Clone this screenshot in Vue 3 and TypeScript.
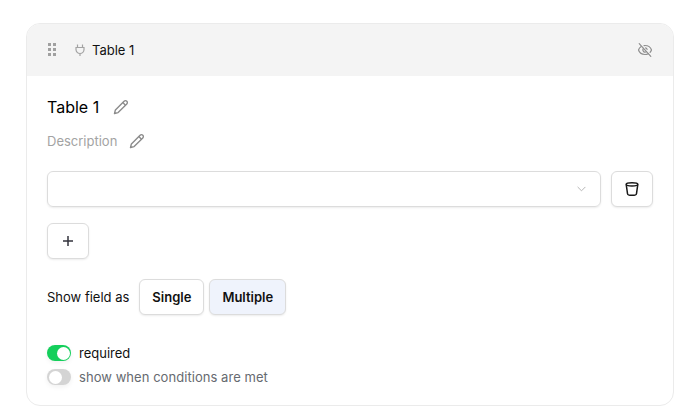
<template>
  <div class="page">
    <section class="card">
      <header class="card-head">
        <div class="head-left">
          <span class="grip"><i v-for="n in 6" :key="n"></i></span>
          <svg class="plug" viewBox="0 0 12 12" width="12" height="12" fill="none" stroke="#a3a3a3" stroke-width="1.200">
            <path d="M3.500 .5v3M8.500 .5v3M2 3.500h8v2a4 4 0 0 1-8 0zM6 9.500V12" />
          </svg>
          <span class="head-title">Table 1</span>
        </div>
        <svg class="eye" viewBox="0 0 16 16" width="16" height="16" fill="none" stroke="#8f8f8f" stroke-width="1.200" stroke-linecap="round">
          <path d="M2.200 1.600l11.600 12.800" />
          <path d="M4.200 4.600C2.800 5.500 1.900 6.800 1.500 8c.9 2.700 3.500 4.500 6.500 4.500 1.200 0 2.300-.3 3.300-.8M7 3.600c.3 0 .7-.1 1-.1 3 0 5.600 1.800 6.500 4.500-.3.900-.8 1.700-1.400 2.400" />
          <path d="M6.400 6.500a2.200 2.200 0 0 0 3.100 3.100M8.600 5.900a2.200 2.200 0 0 1 1.500 1.500" />
        </svg>
      </header>

      <div class="card-body">
        <div class="title-row">
          <span class="title">Table 1</span>
          <svg class="pencil" viewBox="0 0 16 16" width="16" height="16" fill="none" stroke="#8c8c8c" stroke-width="1.400" stroke-linejoin="round">
            <path d="M1.500 14.500l.9-3.600 8.700-8.700a1.900 1.900 0 0 1 2.700 2.700l-8.700 8.700z" />
            <path d="M9.800 3.500l2.700 2.700" />
          </svg>
        </div>
        <div class="desc-row">
          <span class="desc">Description</span>
          <svg class="pencil" viewBox="0 0 16 16" width="16" height="16" fill="none" stroke="#8c8c8c" stroke-width="1.400" stroke-linejoin="round">
            <path d="M1.500 14.500l.9-3.600 8.700-8.700a1.900 1.900 0 0 1 2.700 2.700l-8.700 8.700z" />
            <path d="M9.800 3.500l2.700 2.700" />
          </svg>
        </div>

        <div class="select-row">
          <div class="select">
            <svg viewBox="0 0 10 6" width="9" height="6" fill="none" stroke="#b5b5b5" stroke-width="1.100" stroke-linecap="round">
              <path d="M1 1l4 4 4-4" />
            </svg>
          </div>
          <button class="icon-btn" type="button">
            <svg viewBox="0 0 16 16" width="16" height="16" fill="none" stroke="#1a1a1a" stroke-width="1.500" stroke-linejoin="round">
              <path d="M2.200 3.300c0-1 2.600-1.600 5.800-1.600s5.800.6 5.800 1.600-2.600 1.700-5.800 1.700-5.800-.7-5.800-1.700z" />
              <path d="M2.200 3.300l1.300 9.400c.1 1 2 1.600 4.500 1.600s4.400-.6 4.500-1.600l1.300-9.400" />
            </svg>
          </button>
        </div>

        <button class="icon-btn add" type="button">
          <svg viewBox="0 0 12 12" width="12" height="12" fill="none" stroke="#33333d" stroke-width="1.500">
            <path d="M6 1v10M1 6h10" />
          </svg>
        </button>

        <div class="show-row">
          <span class="show-label">Show field as</span>
          <button
            v-for="o in options"
            :key="o"
            class="opt"
            :class="{ active: o === selected }"
            type="button"
          >{{ o }}</button>
        </div>

        <div class="toggles">
          <div v-for="t in toggles" :key="t.label" class="toggle-row">
            <span class="switch" :class="{ on: t.on }"><i></i></span>
            <span class="toggle-label" :class="{ muted: !t.on }">{{ t.label }}</span>
          </div>
        </div>
      </div>
    </section>
  </div>
</template>

<script setup lang="ts">
const options: string[] = ["Single", "Multiple"];
const selected = "Multiple";

const toggles: { label: string; on: boolean }[] = [
  { label: "required", on: true },
  { label: "show when conditions are met", on: false },
];
</script>

<style>
html,
body {
  margin: 0;
  background: #fff;
}
</style>

<style scoped>
.page {
  width: 683px;
  height: 415px;
  padding: 23px 9px 0 26px;
  box-sizing: border-box;
  overflow: hidden;
  font-family: Inter, "Liberation Sans", sans-serif;
  color: #111;
}

.card {
  border: 1px solid #ebebeb;
  border-radius: 14px;
  overflow: hidden;
  height: 383px;
  box-sizing: border-box;
}

.card-head {
  height: 52px;
  background: #f4f4f4;
  display: flex;
  align-items: center;
  justify-content: space-between;
  padding: 0 20px 0 21px;
}

.head-left {
  display: flex;
  align-items: center;
  margin-top: -1px;
}

.grip {
  display: grid;
  grid-template-columns: 3px 3px;
  grid-auto-rows: 3px;
  gap: 2px;
  margin-right: 18px;
}

.grip i {
  background: #a0a0a0;
}

.plug {
  margin-right: 6px;
}

.head-title {
  font-size: 13px;
  font-weight: 400;
  color: #111;
}

.card-body {
  padding: 21px 20px 0;
}

.title-row,
.desc-row {
  display: flex;
  align-items: center;
}

.title-row {
  height: 20px;
  gap: 14px;
}

.title {
  font-size: 16px;
  font-weight: 400;
  color: #000;
}

.desc-row {
  margin-top: 14px;
  height: 20px;
  gap: 12px;
}

.desc {
  font-size: 13px;
  color: #a3a3a3;
}

.select-row {
  display: flex;
  gap: 10px;
  margin-top: 20px;
}

.select {
  flex: 1;
  height: 36px;
  box-sizing: border-box;
  border: 1px solid #dcdcdc;
  border-radius: 6px;
  box-shadow: 0 1px 2px rgba(0, 0, 0, 0.08);
  display: flex;
  align-items: center;
  justify-content: flex-end;
  padding-right: 14px;
}

.icon-btn {
  width: 42px;
  height: 36px;
  box-sizing: border-box;
  flex-shrink: 0;
  padding: 0;
  background: #fff;
  border: 1px solid #dcdcdc;
  border-radius: 6px;
  box-shadow: 0 1px 2px rgba(0, 0, 0, 0.08);
  display: flex;
  align-items: center;
  justify-content: center;
}

.add {
  margin-top: 16px;
}

.show-row {
  display: flex;
  align-items: center;
  margin-top: 20px;
  gap: 5px;
}

.show-label {
  font-size: 13px;
  margin-right: 5px;
  color: #111;
}

.opt {
  height: 36px;
  box-sizing: border-box;
  padding: 0 12px;
  font-family: inherit;
  font-size: 13px;
  font-weight: 600;
  color: #111;
  background: #fff;
  border: 1px solid #dcdcdc;
  border-radius: 6px;
  box-shadow: 0 1px 2px rgba(0, 0, 0, 0.08);
}

.opt.active {
  background: #eff3fc;
}

.toggles {
  margin-top: 30px;
  display: flex;
  flex-direction: column;
  gap: 8px;
}

.toggle-row {
  display: flex;
  align-items: center;
  gap: 8px;
  height: 16px;
}

.switch {
  width: 24px;
  height: 16px;
  border-radius: 8px;
  background: #d4d4d4;
  display: flex;
  align-items: center;
  padding: 0 1.500px;
  box-sizing: border-box;
  box-shadow: 0 2px 5px rgba(0, 0, 0, 0.06);
}

.switch i {
  width: 13px;
  height: 13px;
  border-radius: 50%;
  background: #fff;
}

.switch.on {
  background: #14cf5b;
  justify-content: flex-end;
}

.toggle-label {
  font-size: 13px;
  color: #111;
}

.toggle-label.muted {
  color: #666a70;
  letter-spacing: 0.05px;
}
</style>
